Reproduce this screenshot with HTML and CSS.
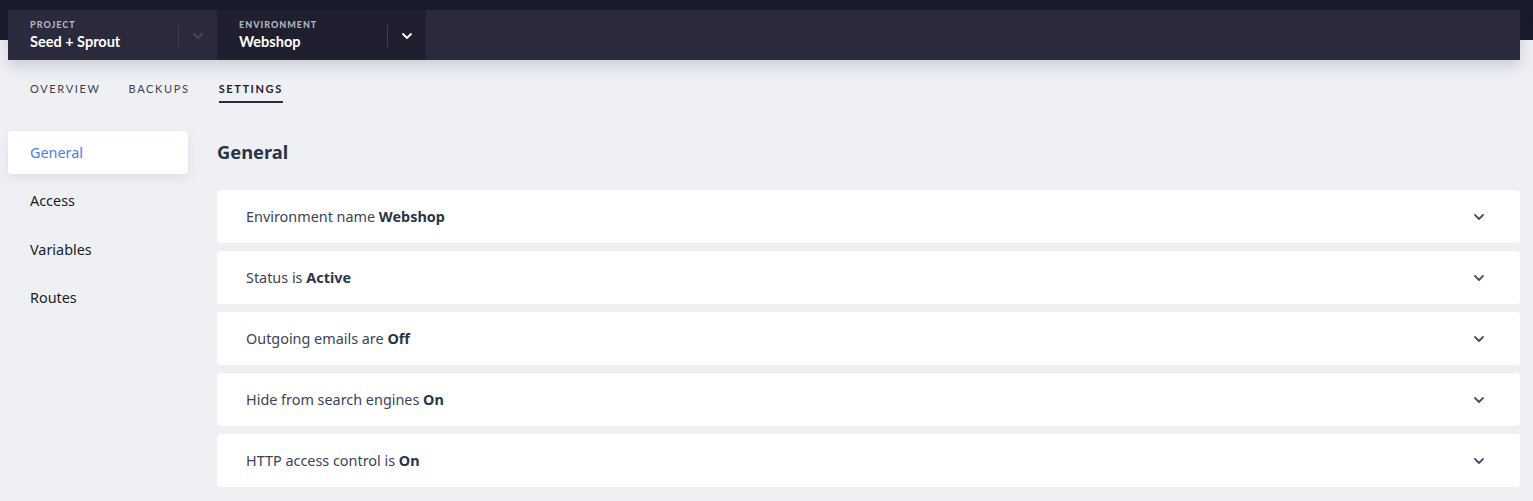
FILE: index.html
```html
<!DOCTYPE html>
<html>
<head>
<meta charset="utf-8">
<link rel="stylesheet" href="styles.css">
</head>
<body>
<div class="top">
  <header class="bar">
    <div class="sel sel-project">
      <div class="sel-text">
        <div class="sel-label">PROJECT</div>
        <div class="sel-value">Seed + Sprout</div>
      </div>
      <div class="sel-div"></div>
      <svg class="sel-chev muted" width="12" height="8" viewBox="0 0 12 8"><path d="M2 2l4 4 4-4" fill="none" stroke="currentColor" stroke-width="1.8" stroke-linecap="round" stroke-linejoin="round"/></svg>
    </div>
    <div class="sel sel-env">
      <div class="sel-text">
        <div class="sel-label">ENVIRONMENT</div>
        <div class="sel-value">Webshop</div>
      </div>
      <div class="sel-div"></div>
      <svg class="sel-chev" width="12" height="8" viewBox="0 0 12 8"><path d="M2 2l4 4 4-4" fill="none" stroke="currentColor" stroke-width="1.8" stroke-linecap="round" stroke-linejoin="round"/></svg>
    </div>
  </header>
</div>
<nav class="tabs">
  <a class="tab">OVERVIEW</a>
  <a class="tab">BACKUPS</a>
  <a class="tab active">SETTINGS</a>
</nav>
<main class="main">
  <aside class="side">
    <div class="side-item active">General</div>
    <div class="side-item">Access</div>
    <div class="side-item">Variables</div>
    <div class="side-item">Routes</div>
  </aside>
  <section class="content">
    <h1 class="title">General</h1>
    <div class="row"><span>Environment name <b>Webshop</b></span><svg class="chev" width="12" height="8" viewBox="0 0 12 8"><path d="M2 2l4 4 4-4" fill="none" stroke="currentColor" stroke-width="1.8" stroke-linecap="round" stroke-linejoin="round"/></svg></div>
    <div class="row"><span>Status is <b>Active</b></span><svg class="chev" width="12" height="8" viewBox="0 0 12 8"><path d="M2 2l4 4 4-4" fill="none" stroke="currentColor" stroke-width="1.8" stroke-linecap="round" stroke-linejoin="round"/></svg></div>
    <div class="row"><span>Outgoing emails are <b>Off</b></span><svg class="chev" width="12" height="8" viewBox="0 0 12 8"><path d="M2 2l4 4 4-4" fill="none" stroke="currentColor" stroke-width="1.8" stroke-linecap="round" stroke-linejoin="round"/></svg></div>
    <div class="row"><span>Hide from search engines <b>On</b></span><svg class="chev" width="12" height="8" viewBox="0 0 12 8"><path d="M2 2l4 4 4-4" fill="none" stroke="currentColor" stroke-width="1.8" stroke-linecap="round" stroke-linejoin="round"/></svg></div>
    <div class="row"><span>HTTP access control is <b>On</b></span><svg class="chev" width="12" height="8" viewBox="0 0 12 8"><path d="M2 2l4 4 4-4" fill="none" stroke="currentColor" stroke-width="1.8" stroke-linecap="round" stroke-linejoin="round"/></svg></div>
  </section>
</main>
</body>
</html>
```
FILE: styles.css
```css
* { box-sizing: border-box; }
html, body { margin: 0; }
body {
  background: #eef0f4;
  font-family: "Noto Sans", "Open Sans", sans-serif;
  color: #2f3a4e;
  overflow: hidden;
}
.top {
  background: linear-gradient(#1a1b2a 0, #1a1b2a 40px, transparent 40px);
  padding: 10px 13px 0 8px;
}
.bar {
  height: 50px;
  background: #2a2a3c;
  display: flex;
  box-shadow: 0 6px 14px rgba(40, 50, 80, 0.18);
}
.sel {
  width: 209px;
  display: flex;
  align-items: center;
  padding-left: 22px;
  font-family: Lato, "Noto Sans", sans-serif;
}
.sel-env { background: #1f1f2f; }
.sel-text { flex: 1; }
.sel-label {
  font-size: 9px;
  font-weight: 900;
  letter-spacing: 1px;
  color: #b2b2c0;
  line-height: 11px;
}
.sel-value {
  font-size: 14.5px;
  font-weight: 700;
  color: #ffffff;
  line-height: 20px;
  margin-top: 2px;
}
.sel-div {
  width: 1px;
  height: 22px;
  background: #3e3e50;
  margin-top: 2px;
}
.sel-chev {
  color: #ffffff;
  margin: 2px 13px 0 13px;
}
.sel-chev.muted { color: #4a4a5c; }
.tabs {
  display: flex;
  gap: 28px;
  padding: 21px 0 0 30px;
  height: 71px;
}
.tab {
  font-family: Lato, "Noto Sans", sans-serif;
  font-size: 11px;
  letter-spacing: 1.65px;
  color: #3d4150;
  height: 22px;
  line-height: 16px;
}
.tab.active {
  color: #1f2233;
  font-weight: 700;
  letter-spacing: 1.6px;
  margin-left: 1px;
  border-bottom: 2px solid #2a2b3d;
}
.main {
  display: flex;
  padding: 0 13px 0 8px;
}
.side {
  width: 180px;
  flex: none;
  margin-right: 29px;
}
.side-item {
  height: 43px;
  margin-bottom: 5.5px;
  display: flex;
  align-items: center;
  padding-left: 22px;
  padding-bottom: 1px;
  font-size: 14.4px;
  color: #1c1e26;
  border-radius: 4px;
}
.side-item.active {
  background: #ffffff;
  color: #4a7df5;
  box-shadow: 0 4px 12px rgba(40, 50, 80, 0.08);
}
.content { flex: 1; }
.title {
  margin: 0;
  font-size: 18.3px;
  font-weight: 700;
  line-height: 42px;
  height: 59px;
  color: #2b3447;
}
.row {
  height: 53px;
  margin-bottom: 8px;
  background: #ffffff;
  border-radius: 4px;
  display: flex;
  align-items: center;
  justify-content: space-between;
  padding: 0 35px 0 29px;
  font-size: 14.4px;
  color: #3a4357;
}
.row b { font-weight: 700; color: #2b3447; }
.chev { color: #4e5160; }
```
